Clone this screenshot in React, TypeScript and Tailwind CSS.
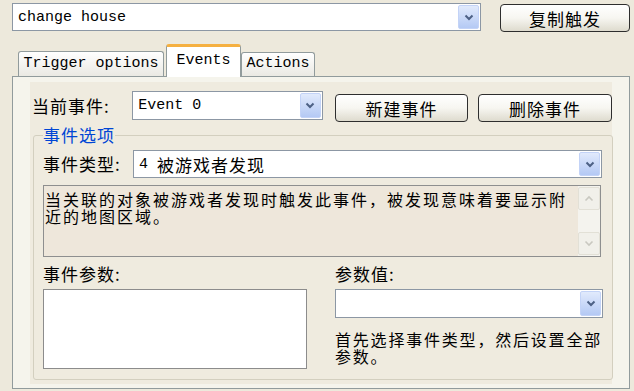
import React from "react";

const DropButton: React.FC = () => (
  <div className="flex h-full w-[21px] items-center justify-center rounded-[2px] border border-[#c3d3f7] bg-gradient-to-b from-[#e1eafc] to-[#b4c9f4]">
    <svg width="10" height="7" viewBox="0 0 10 7">
      <path d="M1.5 1.5 L5 5 L8.5 1.5" fill="none" stroke="#4d6185" strokeWidth="2" />
    </svg>
  </div>
);

interface ComboProps {
  className: string;
  children?: React.ReactNode;
}

const Combo: React.FC<ComboProps> = ({ className, children }) => (
  <div className={`flex border border-[#8c97a4] bg-white p-[1px] ${className}`}>
    <div className="flex flex-1 items-center whitespace-nowrap pl-[4px] leading-none text-black">
      {children}
    </div>
    <DropButton />
  </div>
);

const XPButton: React.FC<{ className: string; label: string }> = ({ className, label }) => (
  <button
    className={`flex items-center justify-center rounded-[4px] border border-[#2e2e2e] bg-gradient-to-b from-white via-[#f7f6f1] to-[#dedbce] text-[17px] leading-none tracking-[1px] text-black ${className}`}
  >
    {label}
  </button>
);

export default function App() {
  return (
    <div className="relative h-[391px] w-[634px] overflow-hidden bg-[#ede9dc] font-['Noto_Sans_CJK_SC','Noto_Sans',sans-serif] text-[17px] text-black">
      {/* top row */}
      <div className="flex items-start pl-[12px] pt-[3px]">
        <Combo className="h-[28px] w-[469px]">
          <span className="font-mono text-[15px]">change house</span>
        </Combo>
        <XPButton className="ml-[19px] mt-[1px] h-[28px] w-[130px]" label="复制触发" />
      </div>

      {/* tabs */}
      <div className="mt-[12px] flex h-[32px] items-end pl-[18px] font-mono text-[15px]">
        <div className="flex h-[25px] w-[146px] items-center justify-center rounded-t-[3px] border border-b-0 border-[#919b9c] bg-gradient-to-b from-white to-[#eae9e3]">
          Trigger options
        </div>
        <div className="relative z-10 -mb-[1px] ml-[2px] flex h-[33px] w-[75px] items-center justify-center rounded-t-[3px] border-x border-t-[3px] border-x-[#919b9c] border-t-[#f5b041] bg-white pb-[2px]">
          Events
        </div>
        <div className="flex h-[24px] w-[74px] items-center justify-center rounded-t-[3px] border border-b-0 border-[#919b9c] bg-gradient-to-b from-white to-[#eae9e3]">
          Actions
        </div>
      </div>

      {/* panel */}
      <div className="ml-[12px] h-[313px] w-[618px] border border-[#919b9c] bg-[#f5f4ec]">
        <div className="ml-[17px] mt-[5px] h-[302px] w-[582px] bg-[#efebdf]">
          {/* current event row */}
          <div className="flex items-start pl-[2px] pt-[9px]">
            <div className="flex h-[29px] w-[101px] items-center tracking-[1px]">当前事件:</div>
            <Combo className="h-[29px] w-[192px]">
              <span className="font-mono text-[15px]">Event 0</span>
            </Combo>
            <XPButton className="ml-[12px] mt-[3px] h-[28px] w-[134px]" label="新建事件" />
            <XPButton className="ml-[10px] mt-[3px] h-[28px] w-[135px]" label="删除事件" />
          </div>

          {/* group box */}
          <fieldset className="ml-[3px] mt-[4px] h-[254px] w-[577px] rounded-[3px] border border-[#d3cfbf] px-[9px]">
            <legend className="px-0 text-[17px] leading-[18px] tracking-[1px] text-[#0046d5]">事件选项</legend>

            <div className="mt-[6px] flex items-center">
              <div className="w-[90px] tracking-[1px]">事件类型:</div>
              <Combo className="h-[28px] w-[469px]">
                <span className="font-mono text-[15px]">4&nbsp;</span>
                <span className="tracking-[1px]">被游戏者发现</span>
              </Combo>
            </div>

            {/* description */}
            <div className="mt-[7px] flex h-[72px] w-[558px] border border-[#8e8f8f] bg-[#eee7db]">
              <div className="flex-1 whitespace-nowrap pl-[1px] pt-[5px] text-[16px] leading-[17px] tracking-[2px]">
                当关联的对象被游戏者发现时触发此事件，被发现意味着要显示附
                <br />
                近的地图区域。
              </div>
              <div className="flex w-[22px] flex-col justify-between bg-[#f4f3ee] py-[1px]">
                <div className="flex h-[23px] items-center justify-center rounded-[2px] border border-[#e2e0d6] bg-[#f1f0ea]">
                  <svg width="10" height="7" viewBox="0 0 10 7">
                    <path d="M1.5 5.5 L5 2 L8.5 5.5" fill="none" stroke="#c9c8c0" strokeWidth="1.6" />
                  </svg>
                </div>
                <div className="flex h-[23px] items-center justify-center rounded-[2px] border border-[#e2e0d6] bg-[#f1f0ea]">
                  <svg width="10" height="7" viewBox="0 0 10 7">
                    <path d="M1.5 1.5 L5 5 L8.5 1.5" fill="none" stroke="#c9c8c0" strokeWidth="1.6" />
                  </svg>
                </div>
              </div>
            </div>

            {/* params */}
            <div className="flex">
              <div className="w-[264px]">
                <div className="mt-[8px] leading-[18px] tracking-[1px]">事件参数:</div>
                <div className="mt-[6px] h-[80px] w-[264px] border border-[#8c8c8c] bg-white" />
              </div>
              <div className="ml-[28px] w-[268px]">
                <div className="mt-[8px] leading-[18px] tracking-[1px]">参数值:</div>
                <Combo className="mt-[6px] h-[29px] w-[268px]" />
                <div className="mt-[13px] whitespace-nowrap text-[16px] leading-[17px] tracking-[1.8px]">
                  首先选择事件类型，然后设置全部
                  <br />
                  参数。
                </div>
              </div>
            </div>
          </fieldset>
        </div>
      </div>
    </div>
  );
}
